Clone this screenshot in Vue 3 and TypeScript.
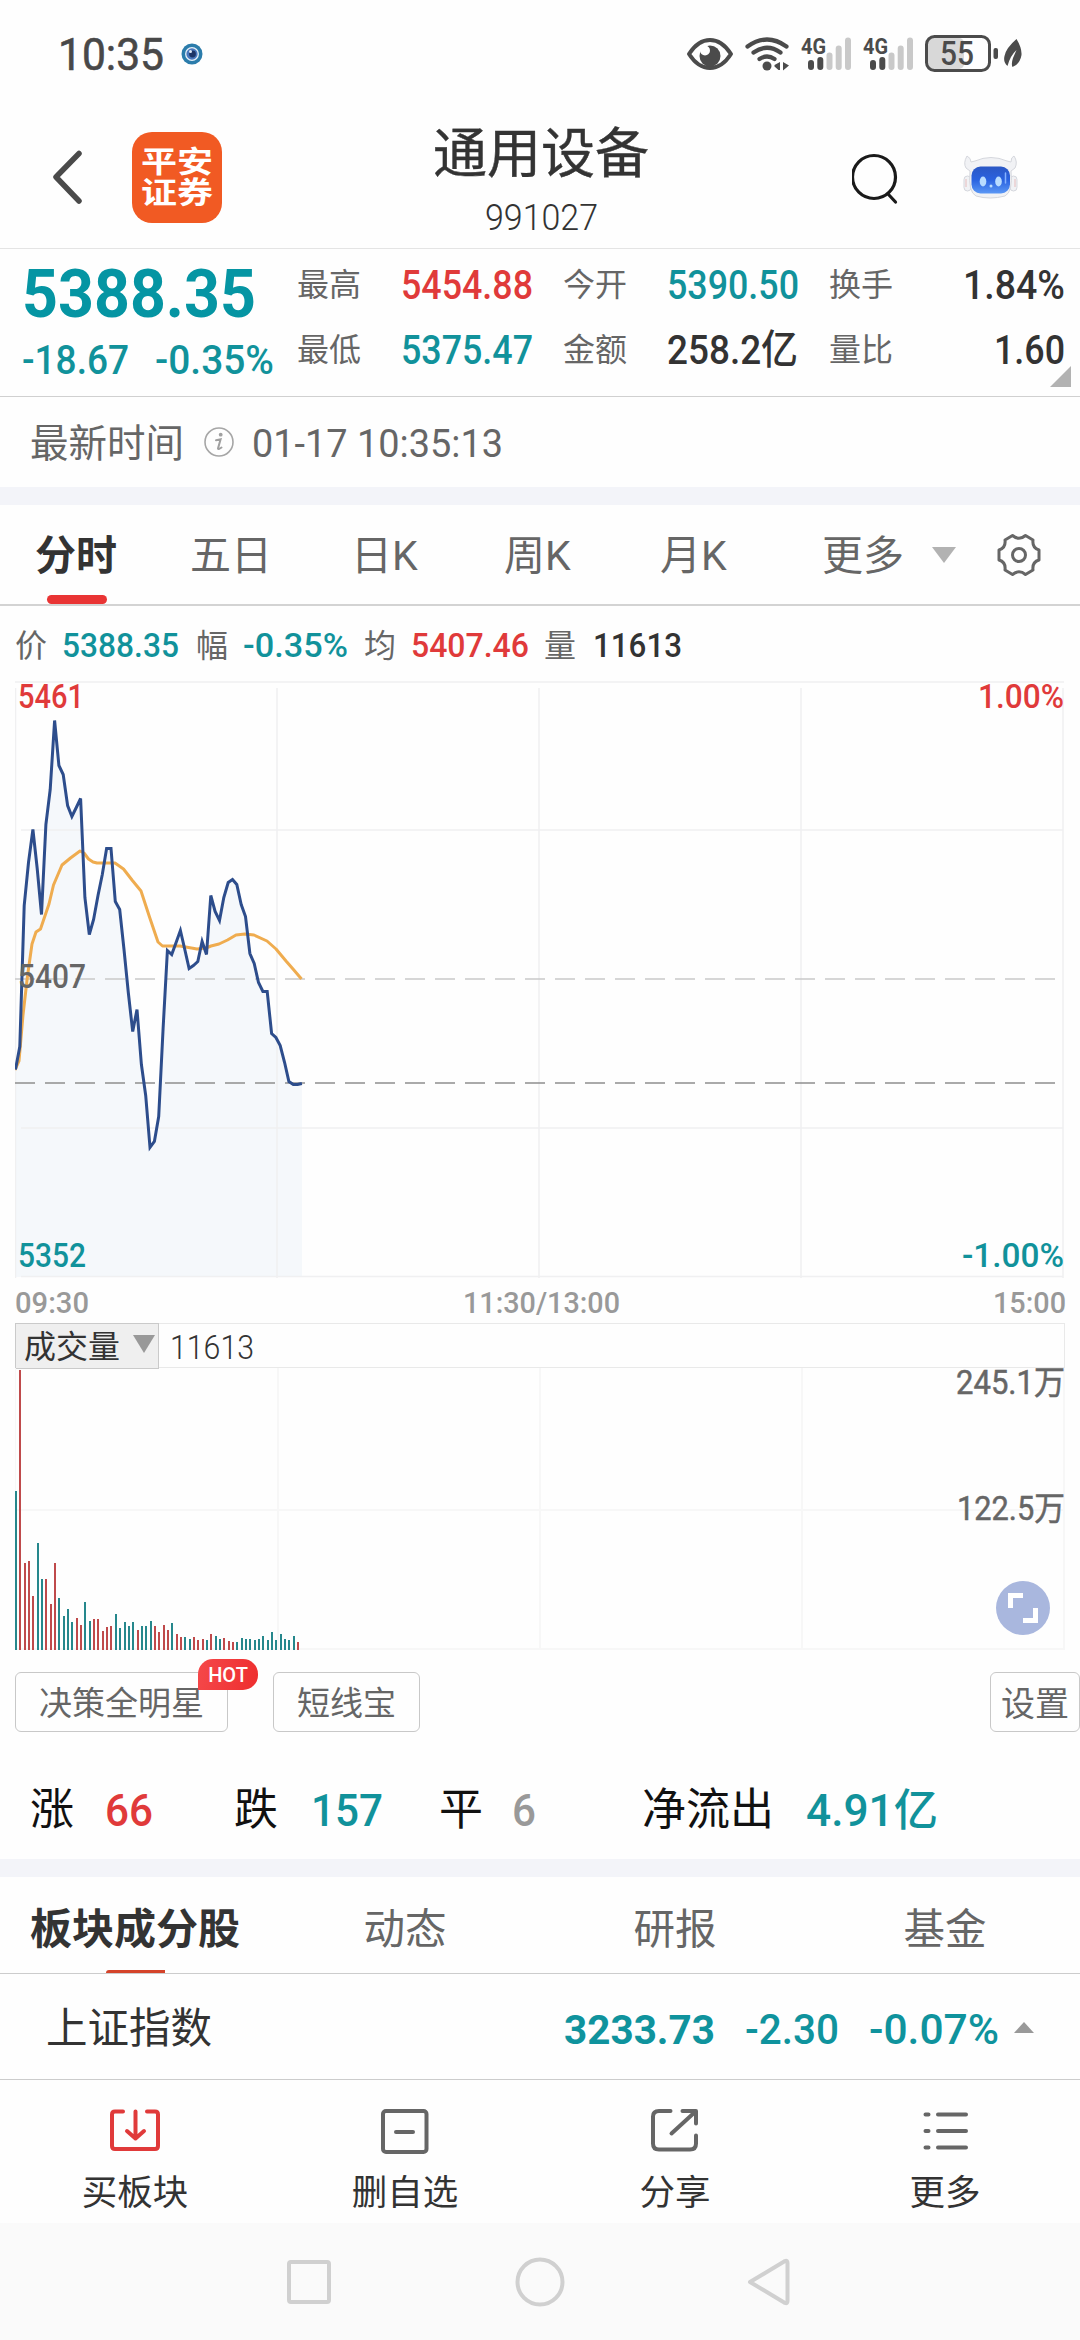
<script setup lang="ts">
import type { Directive } from 'vue'

/** Condenses a line of text horizontally so that it takes exactly the given width. */
const vFit: Directive<HTMLElement, number> = {
  mounted(el, { value }) {
    const natural = el.getBoundingClientRect().width
    el.style.transform = `scaleX(${value / natural})`
    el.style.marginRight = `${value - natural}px`
  },
}

type Tone = 'up' | 'down' | 'plain'

interface Metric {
  label: string
  value: string
  tone: Tone
  width: number
}

const metrics: Metric[] = [
  { label: '最高', value: '5454.88', tone: 'up', width: 132 },
  { label: '今开', value: '5390.50', tone: 'down', width: 132 },
  { label: '换手', value: '1.84%', tone: 'plain', width: 102 },
  { label: '最低', value: '5375.47', tone: 'down', width: 132 },
  { label: '金额', value: '258.2亿', tone: 'plain', width: 131 },
  { label: '量比', value: '1.60', tone: 'plain', width: 71 },
]

const periods = ['分时', '五日', '日K', '周K', '月K', '更多']

const ticks: Metric[] = [
  { label: '价', value: '5388.35', tone: 'down', width: 117 },
  { label: '幅', value: '-0.35%', tone: 'down', width: 105 },
  { label: '均', value: '5407.46', tone: 'up', width: 118 },
  { label: '量', value: '11613', tone: 'plain', width: 89 },
]

// Minute step of both charts, in pixels
const STEP = 4.34

const priceY = [
  389, 366, 225, 182, 149, 188, 234, 144, 109, 40, 85, 94, 125, 136, 127, 118, 217, 254, 239, 215,
  194, 168, 168, 221, 229, 269, 312, 351, 329, 384, 415, 467, 461, 436, 348, 270, 274, 262, 250, 269,
  288, 285, 281, 261, 274, 215, 231, 240, 217, 202, 199, 204, 224, 236, 273, 283, 302, 311, 311, 353,
  357, 365, 382, 401, 404, 404, 403,
]
const price = priceY.map((y, i) => `${(i * STEP + 0.5).toFixed(1)},${y - 0.5}`).join(' ')
const area = `0,596 ${price} 287,596`

const average =
  '0,389 4,380 8,334 12.5,295 17,263 21,251 25.5,248 34,223 38.5,204 47,184 55.5,177 65,170 69,172 73.5,178 78,181 82,182 91,182 100,182 108.5,188 117,199 126,210 134.5,236 143,261 147.5,265 156,265 165,265 173.5,266.5 182,268 191,267 196,265 204,263 212.5,259 221,254 230,253 239,254 252,260 261,268 271,280 278,288 286.5,298'

// Height of each minute's bar; a negative value is a rising minute
const volumes = [
  159, -280, -87, -89, -54, 107, 71, -71, -46, -87, 52, 34, 41, 28, -32, -25, 48, 29, -31, -31, -19,
  -23, -24, 36, 22, 28, 24, 28, -20, 24, 24, 29, -24, -18, -25, -20, 27, -16, -13, 13, 11, -13, -10,
  -11, 10, -16, 14, 11, -12, -9, -8, 8, 12, 11, 11, 10, 11, 14, 10, 18, 10, 16, 11, 10, 14, -8,
]
const bars = volumes.map((v, i) => ({
  x: Math.round(i * STEP),
  h: Math.abs(v),
  fill: v < 0 ? '#bf4a4b' : '#26878c',
}))
</script>

<template>
  <div class="page">
    <header class="status">
      <span v-fit="106" class="num clock">10:35</span>
      <svg class="orb" width="22" height="22" viewBox="0 0 22 22">
        <circle cx="11" cy="11" r="10.5" fill="#2b7cab" />
        <circle cx="11" cy="11" r="6.3" fill="#4a78bd" stroke="#e6f0f8" stroke-width="1.3" />
        <circle cx="11.5" cy="11" r="3.4" fill="#1d3567" />
        <circle cx="9.5" cy="8.5" r="1.5" fill="#dfeaf8" />
      </svg>
      <svg class="status-icons" width="340" height="40" viewBox="685 34 340 40">
        <g fill="none" stroke="#4b4b4b" stroke-linecap="round">
          <path d="M689 54Q698 40 710 40T731 54Q722 68 710 68T689 54Z" stroke-width="4" stroke-linejoin="round" />
          <path d="M747.500 46.500Q767 32.500 786.500 46.500M753.500 52.500Q767 43 780.500 52.500M759.500 59Q767 54 774.500 59" stroke-width="4.200" />
        </g>
        <circle cx="710" cy="56" r="10.500" fill="#4b4b4b" />
        <circle cx="705" cy="50.500" r="5" fill="#fff" />
        <circle cx="767" cy="66" r="4.500" fill="#4b4b4b" />
        <path d="M780 62v8h-1.500l-4-3.500v-1.500zM783 62l6 3.500-6 5z" fill="#4b4b4b" />
        <g v-for="dx in [0, 62]" :key="dx" :transform="`translate(${dx} 0)`">
          <text x="801" y="53.500" class="network" textLength="25" lengthAdjust="spacingAndGlyphs">4G</text>
          <g stroke-width="6" stroke-linecap="round">
            <path d="M811 63v4M820.300 60v7" stroke="#4b4b4b" />
            <path d="M829.500 55.500V67M838.700 48.500V67M848 40.500V67" stroke="#c9c9c9" />
          </g>
        </g>
        <rect x="928" y="38" width="36" height="31" rx="5" fill="#d8d8d8" />
        <rect x="926.500" y="36.500" width="63" height="34" rx="8" fill="none" stroke="#4b4b4b" stroke-width="3" />
        <rect x="993.500" y="48" width="4.500" height="11" rx="2" fill="#4b4b4b" />
        <text x="940" y="65" class="charge" textLength="34" lengthAdjust="spacingAndGlyphs">55</text>
        <path d="M1016.500 39Q1022 48 1021.500 55Q1020 64 1012.500 67Q1011 64 1013 58L1016.500 50Q1010 56 1007.500 66Q1003 62 1004.500 56Q1006 48 1016.500 39Z" fill="#4b4b4b" />
      </svg>
    </header>

    <div class="titlebar">
      <svg class="back" width="30" height="56" viewBox="0 0 30 56">
        <path d="M27 4.500 4 28l23 24" fill="none" stroke="#4a4a4a" stroke-width="5.500" stroke-linecap="round" stroke-linejoin="round" />
      </svg>
      <div class="logo"><span>平安</span><span>证券</span></div>
      <div class="heading">
        <h1>通用设备</h1>
        <span v-fit="113" class="num code">991027</span>
      </div>
      <svg class="search" width="50" height="54" viewBox="0 0 50 54">
        <g fill="none" stroke="#1a1a1a" stroke-width="3.200" stroke-linecap="round">
          <circle cx="22" cy="25" r="21.500" />
          <path d="M36.500 42.500 43.500 50" />
        </g>
      </svg>
      <svg class="robot" width="56" height="46" viewBox="0 0 56 46">
        <defs>
          <linearGradient id="visor" x1="0" y1="0" x2="0" y2="1">
            <stop offset="0" stop-color="#2b57c4" />
            <stop offset=".5" stop-color="#2a62e0" />
            <stop offset="1" stop-color="#5b98f5" />
          </linearGradient>
        </defs>
        <g fill="#f1f2f5" stroke="#d5d7dd" stroke-width="1">
          <rect x="1" y="22" width="7" height="15" rx="3.500" />
          <rect x="47" y="22" width="7" height="15" rx="3.500" />
          <path d="M4 2Q0 9 3 14L7 17Q5 38 13 42Q27 46 42 42Q50 38 48 17L52 14Q55 8 51 2Q48 3 48 8L44 7Q28 0 12 7L8 8Q8 4 4 2Z" />
        </g>
        <path d="M3 25v8M52 25v8" stroke="#e6bcbc" stroke-width="1" />
        <rect x="8.500" y="12.500" width="38.500" height="27" rx="9" fill="url(#visor)" />
        <ellipse cx="20" cy="27.500" rx="3.300" ry="5" fill="#b9dcff" />
        <ellipse cx="35.500" cy="27.500" rx="3.300" ry="5" fill="#b9dcff" />
        <circle cx="28" cy="32" r="1.500" fill="#b9dcff" />
        <path d="M42.500 19v10" stroke="#86b2ff" stroke-width="1.500" stroke-linecap="round" />
      </svg>
    </div>

    <section class="quote">
      <div class="last">
        <span v-fit="234" class="num big">5388.35</span>
        <div class="change">
          <span v-fit="107" class="num">-18.67</span>
          <span v-fit="119" class="num">-0.35%</span>
        </div>
      </div>
      <div class="metrics">
        <template v-for="m in metrics" :key="m.label">
          <span class="label">{{ m.label }}</span>
          <span class="cell"><span v-fit="m.width" :class="['num', m.tone]">{{ m.value }}</span></span>
        </template>
      </div>
      <i class="corner"></i>
    </section>

    <section class="updated">
      <span>最新时间</span>
      <svg width="32" height="32" viewBox="0 0 32 32">
        <circle cx="16" cy="16" r="14" fill="none" stroke="#a6a6a6" stroke-width="1.600" />
        <circle cx="17.700" cy="8.700" r="1.900" fill="#a0a0a0" />
        <path d="M13 14.200 17.600 13.300 15 22.500Q15 24 18.500 21.500" fill="none" stroke="#a0a0a0" stroke-width="2" stroke-linecap="round" />
      </svg>
      <span v-fit="251" class="num">01-17 10:35:13</span>
    </section>

    <div class="band"></div>

    <nav class="periods">
      <span v-for="(p, i) in periods" :key="p" :class="{ active: i === 0 }">{{ p }}</span>
      <i class="caret"></i>
      <svg width="44" height="44" viewBox="0 0 44 44" fill="none" stroke="#666" stroke-width="3">
        <path d="M15.500 2.500Q22 8 28.500 2.500L36 7Q35 15 42 17V27Q35 29 36 37L28.500 41.500Q22 36 15.500 41.500L8 37Q9 29 2 27V17Q9 15 8 7Z" stroke-linejoin="round" />
        <circle cx="22" cy="22" r="6.500" />
      </svg>
    </nav>

    <div class="ticks">
      <template v-for="t in ticks" :key="t.label">
        <span class="label">{{ t.label }}</span>
        <span v-fit="t.width" :class="['num', t.tone]">{{ t.value }}</span>
      </template>
    </div>

    <section class="intraday">
      <svg class="plot" width="1050" height="597" viewBox="0 0 1050 597">
        <polygon :points="area" fill="#f5f8fb" />
        <g stroke="#f0f0f1" stroke-width="1.500">
          <path d="M0 1H1049M6 149H1048M6 447H1048M6 595.500H1048" />
          <path d="M.5 7V597M262 7V597M524 7V597M786 7V597M1048 7V597" />
        </g>
        <path d="M0 298H1040" stroke="#c9c9c9" stroke-width="1.700" stroke-dasharray="20 10" />
        <path d="M0 402H1040" stroke="#8f8f8f" stroke-width="1.700" stroke-dasharray="20 10" />
        <polyline :points="average" fill="none" stroke="#efac4f" stroke-width="3" stroke-linejoin="round" />
        <polyline :points="price" fill="none" stroke="#2d4d8c" stroke-width="3" stroke-linejoin="miter" />
      </svg>
      <div class="scale left">
        <span v-fit="66" class="num up">5461</span>
        <span v-fit="68" class="num mid">5407</span>
        <span v-fit="68" class="num down">5352</span>
      </div>
      <div class="scale right">
        <span v-fit="86" class="num up">1.00%</span>
        <span v-fit="102" class="num down">-1.00%</span>
      </div>
    </section>

    <div class="hours">
      <span v-fit="74" class="num">09:30</span>
      <span v-fit="157" class="num">11:30/13:00</span>
      <span v-fit="73" class="num">15:00</span>
    </div>

    <section class="volume">
      <div class="volume-head">
        <button type="button"><span>成交量</span><i class="caret dark"></i></button>
        <span v-fit="84" class="num">11613</span>
      </div>
      <div class="volume-body">
        <svg class="plot" width="1050" height="282" viewBox="0 0 1050 282" shape-rendering="crispEdges">
          <path d="M.5 0V282M263 0V282M525 0V282M787 0V282M1049 0V282M0 142H1049M0 281H1049" stroke="#f7f7f7" stroke-width="1.500" />
          <rect v-for="(b, i) in bars" :key="i" :x="b.x" :y="282 - b.h" width="2" :height="b.h" :fill="b.fill" />
        </svg>
        <div class="volume-scale">
          <span v-fit="109" class="num">245.1万</span>
          <span v-fit="108" class="num">122.5万</span>
        </div>
        <svg class="expand" width="54" height="54" viewBox="0 0 54 54">
          <circle cx="27" cy="27" r="27" fill="#a9b7de" />
          <path d="M14.500 27V14.500H27M27 39.500H39.500V27" fill="none" stroke="#fff" stroke-width="5" />
        </svg>
      </div>
    </section>

    <div class="tools">
      <button type="button" class="stars">决策全明星<em>HOT</em></button>
      <button type="button" class="short">短线宝</button>
      <button type="button" class="setup">设置</button>
    </div>

    <section class="breadth">
      <span>涨</span><b v-fit="48" class="num up">66</b>
      <span>跌</span><b v-fit="72" class="num down">157</b>
      <span>平</span><b v-fit="24" class="num flat">6</b>
      <span>净流出</span><b v-fit="132" class="num down">4.91亿</b>
    </section>

    <div class="band"></div>

    <nav class="sections">
      <span class="active">板块成分股</span><span>动态</span><span>研报</span><span>基金</span>
    </nav>

    <section class="index">
      <span class="name">上证指数</span>
      <b v-fit="151" class="num">3233.73</b>
      <span v-fit="94" class="num">-2.30</span>
      <span v-fit="130" class="num">-0.07%</span>
      <i class="rise"></i>
    </section>

    <nav class="actions">
      <a>
        <svg width="54" height="50" viewBox="0 0 54 50" fill="none" stroke="#e03a3a" stroke-width="4" stroke-linecap="round" stroke-linejoin="round">
          <path d="M15 4.500H7Q4 4.500 4 7.500V39Q4 42 7 42H47Q50 42 50 39V7.500Q50 4.500 47 4.500H39" />
          <path d="M27.500 4.500V31M19 24l8.500 7.500L36 24" />
        </svg>
        买板块
      </a>
      <a>
        <svg width="54" height="50" viewBox="0 0 54 50" fill="none" stroke="#666" stroke-width="4" stroke-linecap="round">
          <rect x="5" y="4" width="43.500" height="41" rx="3" />
          <path d="M18 25H35" />
        </svg>
        删自选
      </a>
      <a>
        <svg width="54" height="50" viewBox="0 0 54 50" fill="none" stroke="#666" stroke-width="4" stroke-linecap="round" stroke-linejoin="round">
          <path d="M22.500 4H11Q5 4 5 9.500V36.500Q5 42.500 11 42.500H42Q48 42.500 48 36.500V28.500" />
          <path d="M34.500 4H48V16.500M47 5 23.500 26.500" />
        </svg>
        分享
      </a>
      <a>
        <svg width="54" height="50" viewBox="0 0 54 50" fill="none" stroke="#666" stroke-width="4" stroke-linecap="round">
          <path d="M7.500 7.500H10.500M20 7.500H48M7.500 24H10.500M20 24H48M7.500 40.500H10.500M20 40.500H48" />
        </svg>
        更多
      </a>
    </nav>

    <footer class="system">
      <svg width="520" height="60" viewBox="280 2252 520 60" fill="none" stroke="#d0d0d0" stroke-width="4" stroke-linejoin="round">
        <rect x="289" y="2262" width="40" height="40" rx="2" />
        <circle cx="540" cy="2282" r="22.500" />
        <path d="M750 2282 785 2261Q787.500 2260 787.500 2263V2301Q787.500 2304 785 2303Z" />
      </svg>
    </footer>
  </div>
</template>

<style>
body {
  background: #fefefe;
}
</style>

<style scoped>
* {
  box-sizing: border-box;
}
.page {
  width: 1080px;
  height: 2340px;
  overflow: hidden;
  display: flex;
  flex-direction: column;
  background: #fefefe;
  color: #333;
  font-family: Roboto, 'Noto Sans CJK SC', sans-serif;
  line-height: 1;
  white-space: nowrap;
}
.page > * {
  flex: none;
}
svg {
  display: block;
  flex: none;
}
button {
  font: inherit;
  color: inherit;
  padding: 0;
}
.num {
  display: inline-block;
  flex: none;
  transform-origin: 0 50%;
  font-weight: 500;
  width: max-content;
}
.up {
  color: #e03a3a;
}
.down {
  color: #11929b;
}
.plain {
  color: #333;
}

.status {
  height: 112px;
  padding: 34px 55px 0 58px;
  display: flex;
}
.clock {
  font-size: 45px;
  font-weight: 400;
  line-height: 41px;
  color: #484848;
  -webkit-text-stroke: 0.6px #484848;
}
.orb {
  margin: 9px auto 0 17px;
}
.network {
  font: 700 22px Roboto, sans-serif;
  fill: #4b4b4b;
}
.charge {
  font: 500 33px Roboto, sans-serif;
  fill: #4b4b4b;
}

.titlebar {
  height: 137px;
  border-bottom: 1px solid #e4e4e4;
  display: grid;
  grid-template-columns: 80px 300px 420px 111px 1fr;
  padding-left: 52px;
  align-items: start;
}
.back {
  margin-top: 37px;
}
.logo {
  width: 90px;
  height: 91px;
  margin-top: 20px;
  border-radius: 20px;
  background: #f15a23;
  color: #fff;
  font-size: 36px;
  font-weight: 700;
  line-height: 31px;
  display: flex;
  flex-direction: column;
  align-items: center;
  padding-top: 15px;
}
.logo span {
  transform: scaleY(0.82);
}
.heading {
  width: 218px;
  display: flex;
  flex-direction: column;
  align-items: center;
}
h1 {
  margin: 16px 0 0;
  font-size: 54px;
  font-weight: 400;
  line-height: 54px;
  -webkit-text-stroke: 0.4px #333;
}
.code {
  margin-top: 17px;
  font-size: 37px;
  font-weight: 300;
  line-height: 37px;
}
.search {
  margin-top: 40px;
}
.robot {
  margin-top: 42px;
}

.quote {
  height: 148px;
  border-bottom: 1px solid #d0d0d0;
  padding: 20px 0 0 22px;
  display: grid;
  grid-template-columns: 275px 1fr;
  position: relative;
}
.big {
  font-size: 67.500px;
  font-weight: 700;
  line-height: 50px;
  color: #0595a3;
}
.change {
  display: grid;
  grid-template-columns: 133px 1fr;
  margin-top: 23px;
  font-size: 40.500px;
  line-height: 34px;
  color: #11929b;
}
.metrics {
  display: grid;
  grid-template-columns: 104px 162px 104px 162px 104px 132px;
  grid-auto-rows: 65px;
  line-height: 33px;
}
.metrics .label {
  font-size: 32px;
  color: #666;
}
.metrics .num {
  font-size: 40.500px;
}
.cell:nth-child(6n) {
  text-align: right;
  display: flex;
  justify-content: flex-end;
}
.corner {
  position: absolute;
  right: 9px;
  bottom: 9px;
  border-left: 21px solid transparent;
  border-bottom: 21px solid #b2b2b2;
}

.updated {
  height: 90px;
  padding: 4px 0 0 30px;
  display: grid;
  grid-template-columns: 173px 49px 1fr;
  align-items: center;
  font-size: 38.500px;
  color: #666;
}
.updated svg {
  margin-top: -5px;
}
.updated .num {
  font-size: 39.500px;
  font-weight: 400;
}
.band {
  height: 18px;
  background: #f3f4f9;
}

.periods {
  height: 101px;
  border-bottom: 2px solid #d3d3d3;
  padding-left: 35px;
  display: grid;
  grid-template-columns: 155px 161px 153px 156px 162px 110px 65px 1fr;
  align-items: center;
  font-size: 41px;
  color: #666;
}
.periods span {
  height: 99px;
  padding-top: 4px;
  line-height: 95px;
}
.periods .active {
  font-weight: 700;
  color: #333;
  width: 82px;
  position: relative;
}
.periods .active::after {
  content: '';
  position: absolute;
  left: 12px;
  bottom: 0;
  width: 60px;
  height: 9px;
  border-radius: 5px;
  background: #e93434;
}
.caret {
  width: 0;
  border: 12px solid transparent;
  border-top: 16px solid #b2b2b2;
  border-bottom: 0;
}

.ticks {
  height: 75px;
  padding: 4px 0 0 15px;
  display: grid;
  grid-template-columns: 47px 134px 47px 121px 47px 133px 49px 1fr;
  align-items: center;
  font-size: 32.500px;
}
.ticks .label {
  font-size: 32px;
  color: #666;
}
.ticks .num {
  padding-top: 2px;
}

.intraday {
  position: relative;
  height: 597px;
  margin-left: 15px;
}
.scale {
  position: absolute;
  font-size: 33px;
  line-height: 33px;
  display: flex;
  flex-direction: column;
  justify-content: space-between;
  top: -1px;
  bottom: 6px;
}
.scale.left {
  left: 3px;
}
.scale.right {
  right: 16px;
  align-items: flex-end;
}
.mid {
  color: #666;
}

.hours {
  height: 45px;
  padding: 10px 14px 0 15px;
  display: flex;
  justify-content: space-between;
  font-size: 29.500px;
  line-height: 30px;
  color: #999;
}

.volume {
  margin: 0 15px;
  height: 327px;
}
.volume-head {
  height: 45px;
  border: 1px solid #e9e9e9;
  display: flex;
}
.volume-head button {
  width: 144px;
  height: 46px;
  margin: -1px 10px 0 -1px;
  border: 1px solid #cacaca;
  background: #efefef;
  color: #333;
  display: flex;
  align-items: center;
  font-size: 32px;
  padding-left: 8px;
}
.volume-head button span {
  padding-top: 2px;
}
.caret.dark {
  border-width: 18px 11px 0;
  border-top-color: #999;
  margin: -4px 0 0 13px;
}
.volume-head .num {
  font-size: 33px;
  font-weight: 300;
  line-height: 47px;
  margin-left: 1px;
}
.volume-body {
  height: 282px;
  position: relative;
}
.volume-scale {
  position: absolute;
  top: -5px;
  right: 0;
  display: flex;
  flex-direction: column;
  align-items: flex-end;
  gap: 86px;
  font-size: 33.500px;
  line-height: 40px;
  color: #666;
}
.volume-scale .num {
  font-weight: 400;
  -webkit-text-stroke: 0.5px #666;
}
.expand {
  position: absolute;
  right: 15px;
  bottom: 15px;
}

.tools {
  height: 104px;
  padding: 22px 0 0 15px;
  display: flex;
}
.tools button {
  height: 60px;
  border: 1px solid #c8c8c8;
  border-radius: 6px;
  background: #fefefe;
  color: #666;
  font-size: 33px;
  padding-top: 3px;
}
.stars {
  width: 213px;
  position: relative;
}
.stars em {
  position: absolute;
  left: 182px;
  top: -14px;
  width: 60px;
  height: 31px;
  border-radius: 15px 15px 15px 0;
  background: linear-gradient(100deg, #f5484a, #ee2e2e);
  color: #fff;
  font: 500 20px/32px Roboto, sans-serif;
}
.short {
  width: 147px;
  margin: 0 auto 0 45px;
}
.tools .setup {
  width: 90px;
  font-size: 34px;
}

.breadth {
  height: 105px;
  padding: 0 0 0 30px;
  display: grid;
  grid-template-columns: 75px 129px 77px 128px 73px 130px 164px 1fr;
  align-items: center;
  font-size: 44px;
  color: #111;
}
.breadth span {
  margin-top: 7px;
}
.breadth .num {
  margin-top: 8px;
}
.flat {
  color: #999;
}

.sections {
  height: 97px;
  border-bottom: 1px solid #ccc;
  display: grid;
  grid-template-columns: repeat(4, 270px);
  text-align: center;
  font-size: 41.500px;
  line-height: 86px;
  color: #666;
}
.sections span {
  height: 96px;
  padding-top: 10px;
}
.sections .active {
  font-size: 42px;
  font-weight: 700;
  color: #333;
  position: relative;
}
.sections .active::after {
  content: '';
  position: absolute;
  left: 106px;
  bottom: 0;
  width: 59px;
  height: 3px;
  border-radius: 4px 0 0;
  background: #d4432a;
}

.index {
  height: 106px;
  border-bottom: 1px solid #ccc;
  padding: 5px 0 0 46px;
  display: grid;
  grid-template-columns: 518px 181px 124px 144px 1fr;
  align-items: center;
  font-size: 42.500px;
  color: #0f939d;
}
.index .name {
  font-size: 41.500px;
  color: #333;
}
.index b {
  font-size: 41px;
}
.index .num {
  padding-top: 2px;
}
.rise {
  width: 0;
  margin: -4px 0 0 1px;
  border: 10.500px solid transparent;
  border-bottom: 11px solid #999;
  border-top: 0;
}
.index b.num {
  font-weight: 700;
}

.actions {
  height: 143px;
  padding-top: 27px;
  display: grid;
  grid-template-columns: repeat(4, 1fr);
  font-size: 35.500px;
  line-height: 36px;
}
.actions a {
  display: flex;
  flex-direction: column;
  align-items: center;
  gap: 18px;
}
.system {
  flex: 1 0 auto;
  background: #fafafa;
  padding: 29px 0 0 280px;
}
</style>
